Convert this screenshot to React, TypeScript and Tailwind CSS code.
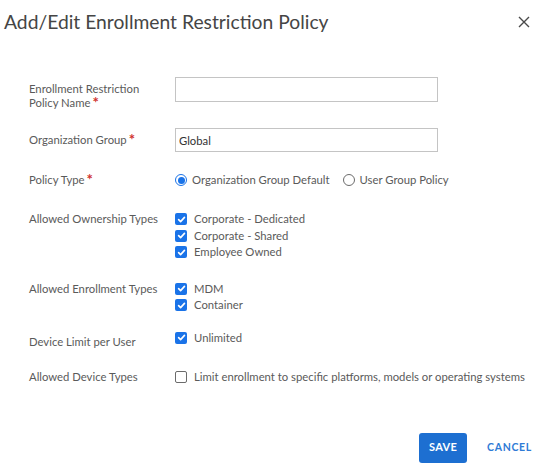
import { useState } from 'react';

function Check({ checked }: { checked: boolean }) {
  if (!checked) {
    return <span className="inline-block w-[12px] h-[12px] rounded-[2px] border border-[#6b6b6b] bg-white shrink-0" />;
  }
  return (
    <span className="inline-flex items-center justify-center w-[12px] h-[12px] rounded-[2px] bg-[#1a73e8] shrink-0">
      <svg width="9" height="9" viewBox="0 0 10 10" fill="none">
        <path d="M1.8 5.2 L4 7.4 L8.3 2.6" stroke="white" strokeWidth="1.8" strokeLinecap="round" strokeLinejoin="round" />
      </svg>
    </span>
  );
}

function Radio({ checked }: { checked: boolean }) {
  return (
    <span
      className={
        checked
          ? 'inline-flex items-center justify-center w-[12px] h-[12px] rounded-full border border-[#1a73e8] bg-white shrink-0'
          : 'inline-block w-[12px] h-[12px] rounded-full border border-[#6b6b6b] bg-white shrink-0'
      }
    >
      {checked && <span className="block w-[7px] h-[7px] rounded-full bg-[#1a73e8]" />}
    </span>
  );
}

function Req() {
  return (
    <span className="relative top-[1px] leading-[0] ml-[2px] text-[#d0312d] text-[15px] font-bold">*</span>
  );
}

function CheckRow({ checked, label }: { checked: boolean; label: string }) {
  return (
    <div className="flex items-center gap-[7px] h-[16.5px] whitespace-nowrap">
      <Check checked={checked} />
      <span>{label}</span>
    </div>
  );
}

export default function App() {
  const [name, setName] = useState('');
  const [group, setGroup] = useState('Global');

  return (
    <div className="w-[550px] h-[474px] bg-white text-[#5a5a5a] font-['Lato',sans-serif] text-[11.3px] overflow-hidden">
      <div className="flex items-center justify-between pl-[4px] pr-[20px] pt-[6px] h-[38px]">
        <h1 className="text-[19.3px] text-[#454545] font-normal leading-[26px]">Add/Edit Enrollment Restriction Policy</h1>
        <svg width="12" height="12" viewBox="0 0 12 12">
          <path d="M1 1 L11 11 M11 1 L1 11" stroke="#4a4a4a" strokeWidth="1.4" />
        </svg>
      </div>

      <div className="pl-[29px] pt-[39px]">
        <div className="flex">
          <div className="w-[146px] pt-[5px] leading-[14px]">
            Enrollment Restriction
            <br />
            Policy Name<Req />
          </div>
          <input
            value={name}
            onChange={(e) => setName(e.target.value)}
            className="w-[263px] h-[25px] border border-[#c4c4c4] px-[3px] text-[11.3px] text-[#333] outline-none"
          />
        </div>

        <div className="flex mt-[18px]">
          <div className="w-[146px] leading-[24px]">
            Organization Group<Req />
          </div>
          <input
            value={group}
            onChange={(e) => setGroup(e.target.value)}
            className="w-[263px] h-[24px] border border-[#c4c4c4] px-[3px] text-[11.3px] text-[#333] outline-none"
          />
        </div>

        <div className="flex mt-[20px] leading-[16px]">
          <div className="w-[146px]">
            Policy Type<Req />
          </div>
          <div className="flex items-center whitespace-nowrap">
            <Radio checked />
            <span className="ml-[5px]">Organization Group Default</span>
            <span className="ml-[13px] flex">
              <Radio checked={false} />
            </span>
            <span className="ml-[5px]">User Group Policy</span>
          </div>
        </div>

        <div className="flex mt-[23px] leading-[16.5px]">
          <div className="w-[146px]">Allowed Ownership Types</div>
          <div>
            <CheckRow checked label="Corporate - Dedicated" />
            <CheckRow checked label="Corporate - Shared" />
            <CheckRow checked label="Employee Owned" />
          </div>
        </div>

        <div className="flex mt-[20px] leading-[16.5px]">
          <div className="w-[146px]">Allowed Enrollment Types</div>
          <div>
            <CheckRow checked label="MDM" />
            <CheckRow checked label="Container" />
          </div>
        </div>

        <div className="flex mt-[16px] leading-[16.5px]">
          <div className="w-[146px] pt-[4px]">Device Limit per User</div>
          <div>
            <CheckRow checked label="Unlimited" />
          </div>
        </div>

        <div className="flex mt-[19px] leading-[16.5px]">
          <div className="w-[146px]">Allowed Device Types</div>
          <div>
            <CheckRow checked={false} label="Limit enrollment to specific platforms, models or operating systems" />
          </div>
        </div>
      </div>

      <div className="flex justify-end items-center mt-[47px] pr-[18px]">
        <button className="w-[48px] h-[30px] rounded-[3px] bg-[#1d6fd1] text-white text-[11px] font-bold tracking-[0.3px]">
          SAVE
        </button>
        <button className="ml-[20px] text-[#2f7bd6] text-[10.5px] font-bold tracking-[0.7px]">CANCEL</button>
      </div>
    </div>
  );
}
